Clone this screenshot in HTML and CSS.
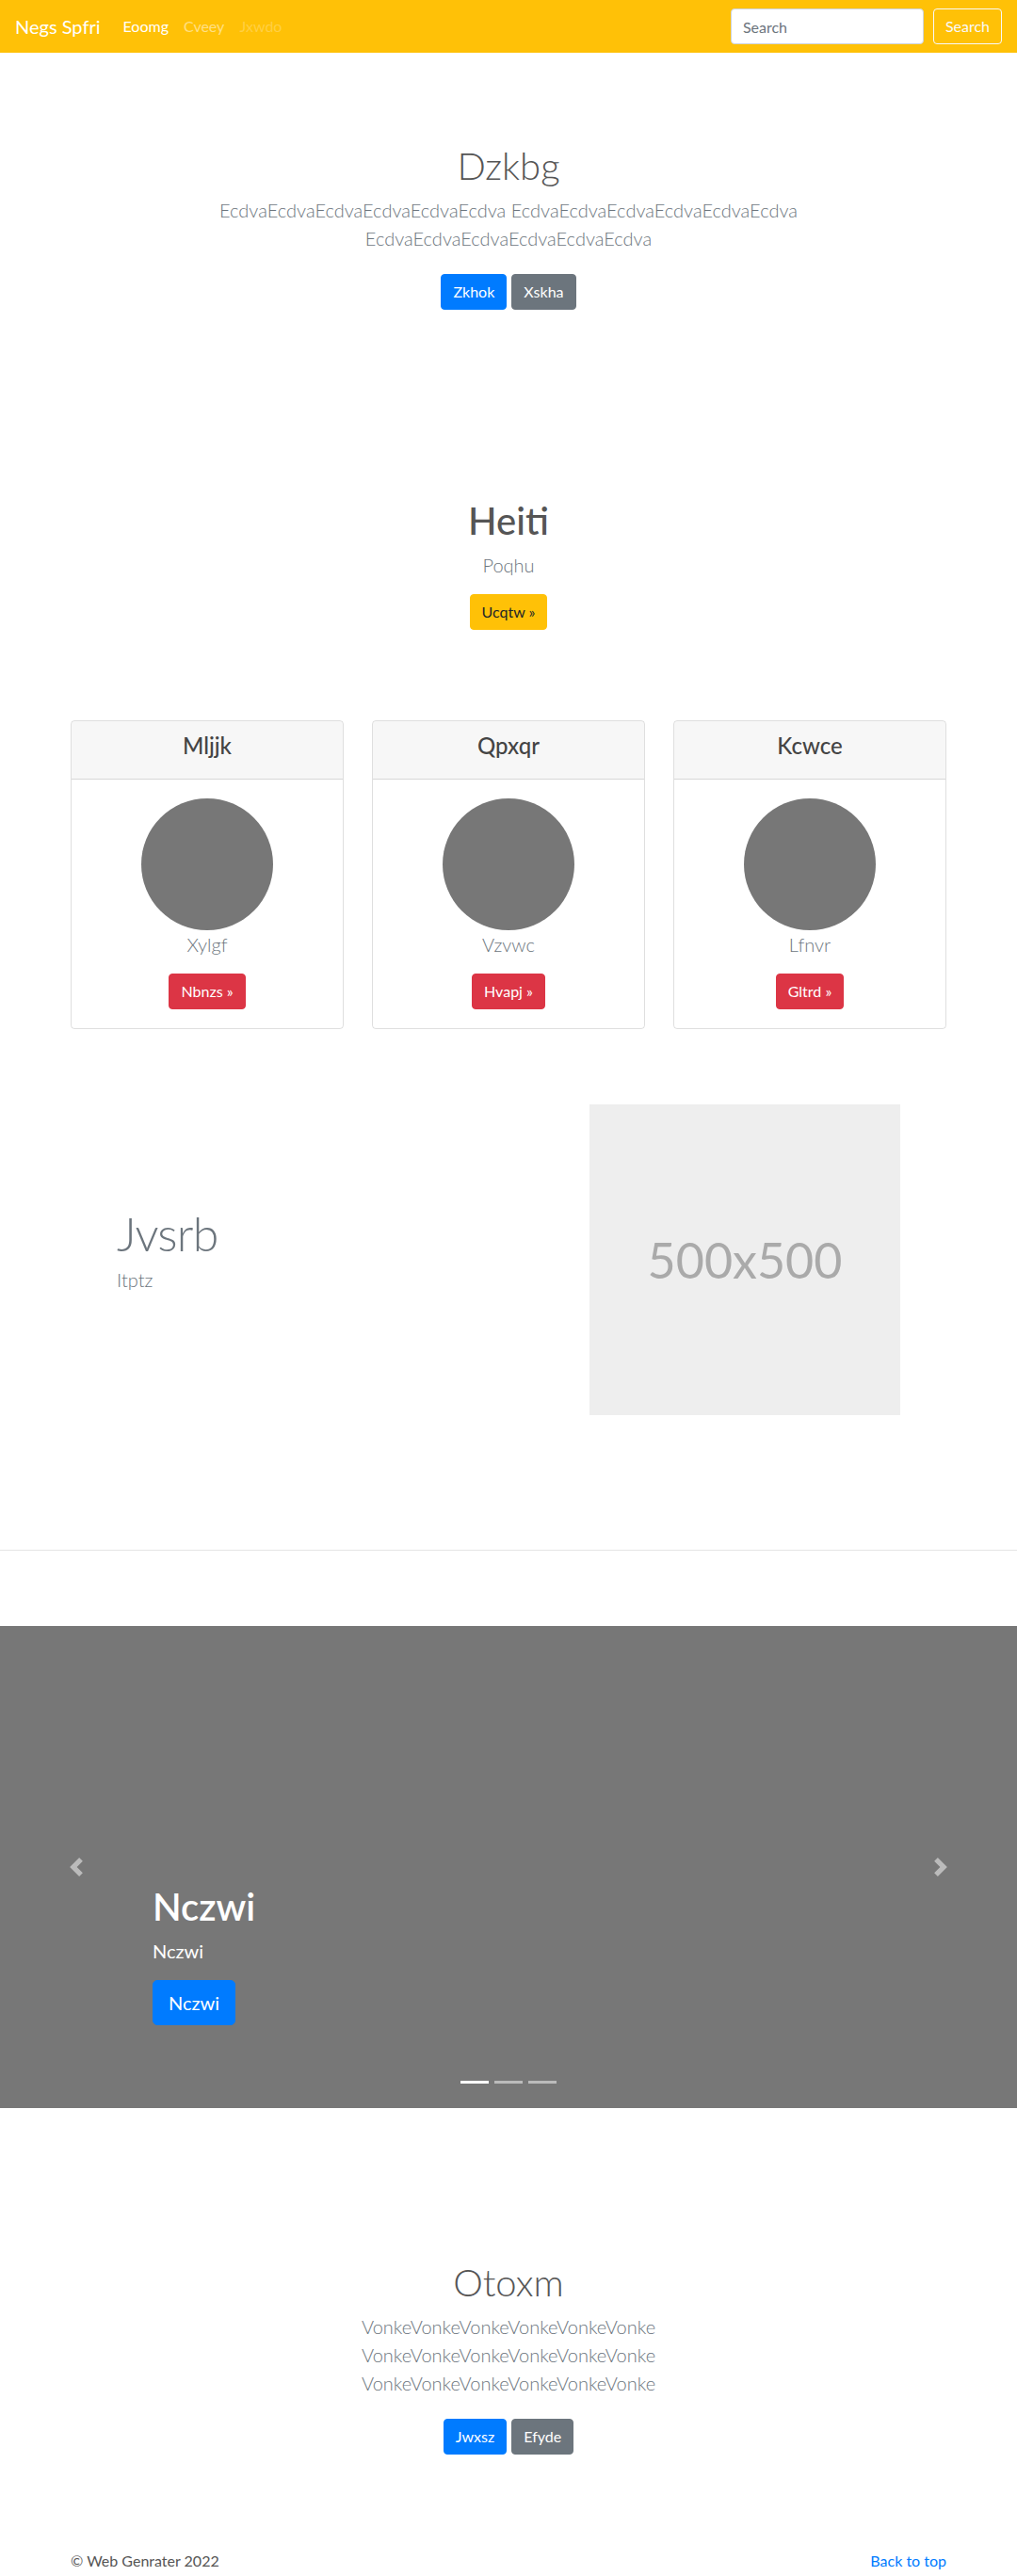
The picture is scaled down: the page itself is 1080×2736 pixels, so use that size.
FILE: index.html
```html
<!DOCTYPE html>
<html lang="en">
<head>
<meta charset="utf-8">
<title>Negs Spfri</title>
<link rel="stylesheet" href="styles.css">
</head>
<body>
<nav class="navbar">
  <a class="brand" href="#">Negs Spfri</a>
  <ul class="nav-links">
    <li><a class="nav-link active" href="#">Eoomg</a></li>
    <li><a class="nav-link" href="#">Cveey</a></li>
    <li><a class="nav-link disabled" href="#">Jxwdo</a></li>
  </ul>
  <form class="search">
    <input class="search-input" type="text" placeholder="Search">
    <button class="search-btn" type="button">Search</button>
  </form>
</nav>

<main>
  <section class="hero hero-top">
    <h1 class="hero-title">Dzkbg</h1>
    <p class="lead hero-lead hero-lead-wide">EcdvaEcdvaEcdvaEcdvaEcdvaEcdva EcdvaEcdvaEcdvaEcdvaEcdvaEcdva EcdvaEcdvaEcdvaEcdvaEcdvaEcdva</p>
    <div class="btn-row">
      <a class="btn btn-primary" href="#">Zkhok</a>
      <a class="btn btn-secondary" href="#">Xskha</a>
    </div>
  </section>

  <section class="hero hero-mid">
    <h1 class="hero-title hero-title-bold">Heiti</h1>
    <p class="lead hero-lead">Poqhu</p>
    <a class="btn btn-warning" href="#">Ucqtw &raquo;</a>
  </section>

  <section class="cards">
    <div class="card">
      <div class="card-header"><h4 class="card-title">Mljjk</h4></div>
      <div class="card-body">
        <div class="avatar"></div>
        <p class="lead card-text">Xylgf</p>
        <a class="btn btn-danger" href="#">Nbnzs &raquo;</a>
      </div>
    </div>
    <div class="card">
      <div class="card-header"><h4 class="card-title">Qpxqr</h4></div>
      <div class="card-body">
        <div class="avatar"></div>
        <p class="lead card-text">Vzvwc</p>
        <a class="btn btn-danger" href="#">Hvapj &raquo;</a>
      </div>
    </div>
    <div class="card">
      <div class="card-header"><h4 class="card-title">Kcwce</h4></div>
      <div class="card-body">
        <div class="avatar"></div>
        <p class="lead card-text">Lfnvr</p>
        <a class="btn btn-danger" href="#">Gltrd &raquo;</a>
      </div>
    </div>
  </section>

  <section class="featurette">
    <div class="featurette-text">
      <h2 class="featurette-heading">Jvsrb</h2>
      <p class="lead featurette-lead">Itptz</p>
    </div>
    <div class="placeholder"><span class="placeholder-text">500x500</span></div>
  </section>

  <hr class="divider">

  <section class="carousel">
    <div class="carousel-caption">
      <h1 class="caption-title">Nczwi</h1>
      <p class="caption-text">Nczwi</p>
      <a class="btn btn-lg btn-primary" href="#">Nczwi</a>
    </div>
    <a class="carousel-control prev" href="#">
      <svg width="20" height="20" viewBox="0 0 8 8" fill="#fff"><path d="M5.25 0l-4 4 4 4 1.5-1.5L4.25 4l2.5-2.5L5.25 0z"/></svg>
    </a>
    <a class="carousel-control next" href="#">
      <svg width="20" height="20" viewBox="0 0 8 8" fill="#fff"><path d="M2.75 0l-1.5 1.5L3.75 4l-2.5 2.5L2.75 8l4-4-4-4z"/></svg>
    </a>
    <ol class="indicators">
      <li class="indicator active"></li>
      <li class="indicator"></li>
      <li class="indicator"></li>
    </ol>
  </section>

  <section class="hero hero-bottom">
    <h1 class="hero-title">Otoxm</h1>
    <p class="lead hero-lead hero-lead-narrow">VonkeVonkeVonkeVonkeVonkeVonke VonkeVonkeVonkeVonkeVonkeVonke VonkeVonkeVonkeVonkeVonkeVonke</p>
    <div class="btn-row">
      <a class="btn btn-primary" href="#">Jwxsz</a>
      <a class="btn btn-secondary" href="#">Efyde</a>
    </div>
  </section>
</main>

<footer class="footer">
  <p class="footer-copy">&copy; Web Genrater 2022</p>
  <a class="footer-link" href="#">Back to top</a>
</footer>
</body>
</html>
```

FILE: styles.css
```css
* { box-sizing: border-box; }

body {
  margin: 0;
  font-family: Lato, "Open Sans", sans-serif;
  font-size: 16px;
  line-height: 1.5;
  color: #555;
  background: #fff;
}

h1, h2, h3, h4, p { margin: 0; }
a { text-decoration: none; }

/* Navbar */
.navbar {
  display: flex;
  align-items: center;
  height: 56px;
  padding: 0 16px;
  background: #ffc107;
}
.brand {
  font-size: 20px;
  line-height: 30px;
  color: #fff;
  margin-right: 16px;
}
.nav-links {
  display: flex;
  flex: 1;
  list-style: none;
  margin: 0;
  padding: 0;
}
.nav-link {
  display: block;
  padding: 8px;
  color: rgba(255, 255, 255, 0.5);
}
.nav-link.active { color: #fff; }
.nav-link.disabled { color: rgba(255, 255, 255, 0.25); }

.search {
  display: flex;
  gap: 10px;
  margin: 0;
}
.search-input {
  width: 205px;
  height: 38px;
  padding: 6px 12px;
  font: inherit;
  color: #495057;
  background: #fff;
  border: 1px solid #ced4da;
  border-radius: 4px;
}
.search-input::placeholder { color: #6c757d; }
.search-btn {
  height: 38px;
  padding: 6px 12px;
  font: inherit;
  color: #f8f9fa;
  background: transparent;
  border: 1px solid #f8f9fa;
  border-radius: 4px;
}

/* Buttons */
.btn {
  display: inline-block;
  padding: 6px 12px;
  font-size: 16px;
  line-height: 1.5;
  font-weight: 400;
  border: 1px solid transparent;
  border-radius: 4px;
  color: #fff;
  vertical-align: middle;
}
.btn-primary { background: #007bff; border-color: #007bff; }
.btn-secondary { background: #6c757d; border-color: #6c757d; }
.btn-warning { background: #ffc107; border-color: #ffc107; color: #212529; }
.btn-danger { background: #dc3545; border-color: #dc3545; }
.btn-lg {
  padding: 8px 16px;
  font-size: 20px;
  border-radius: 5px;
}

/* Hero sections */
.hero { text-align: center; }
.hero-top { padding-top: 96px; }
.hero-mid { margin-top: 200px; }
.hero-bottom { margin-top: 161px; }

.hero-title {
  font-size: 40px;
  font-weight: 300;
  line-height: 1.2;
  margin-bottom: 8px;
  color: #555;
}
.hero-title-bold { font-weight: 500; }

.lead {
  font-size: 20px;
  font-weight: 300;
  line-height: 1.5;
}
.hero-lead {
  margin: 0 auto 16px;
  color: #6c757d;
}
.hero-lead-wide { max-width: 720px; margin-bottom: 23px; }
.hero-lead-narrow { max-width: 450px; margin-bottom: 23px; }

.btn-row {
  display: flex;
  justify-content: center;
  gap: 5px;
}

/* Cards */
.cards {
  display: grid;
  grid-template-columns: repeat(3, 290px);
  justify-content: center;
  gap: 30px;
  margin-top: 96px;
}
.card {
  border: 1px solid rgba(0, 0, 0, 0.125);
  border-radius: 4px;
  text-align: center;
  overflow: hidden;
}
.card-header {
  padding: 12px 20px;
  background: rgba(0, 0, 0, 0.03);
  border-bottom: 1px solid rgba(0, 0, 0, 0.125);
}
.card-title {
  font-size: 24px;
  font-weight: 500;
  line-height: 1.2;
  margin-bottom: 8px;
  color: #444;
}
.card-body { padding: 20px; }
.avatar {
  width: 140px;
  height: 140px;
  margin: 0 auto;
  border-radius: 50%;
  background: #777;
}
.card-text {
  color: #6c757d;
  margin-bottom: 16px;
}

/* Featurette */
.featurette {
  display: flex;
  align-items: center;
  width: 960px;
  margin: 80px auto 0;
  padding: 0 64px;
}
.featurette-text { flex: 1; }
.featurette-heading {
  font-size: 50px;
  font-weight: 300;
  line-height: 1;
  letter-spacing: -0.8px;
  margin-bottom: 9px;
  color: #6c757d;
}
.featurette-lead {
  color: #6c757d;
  margin-bottom: 16px;
}
.placeholder {
  display: flex;
  align-items: center;
  justify-content: center;
  width: 330px;
  height: 330px;
  background: #eee;
}
.placeholder-text {
  font-size: 52px;
  font-weight: 400;
  color: #aaa;
}

.divider {
  margin: 143px 0 80px;
  border: 0;
  border-top: 1px solid rgba(0, 0, 0, 0.1);
}

/* Carousel */
.carousel {
  position: relative;
  height: 512px;
  background: #777;
}
.carousel-caption {
  position: absolute;
  left: 15%;
  right: 15%;
  bottom: 68px;
  padding-bottom: 20px;
  color: #fff;
  text-align: left;
  z-index: 2;
}
.caption-title {
  font-size: 40px;
  font-weight: 600;
  line-height: 1.2;
  margin-bottom: 8px;
}
.caption-text {
  font-size: 20px;
  margin-bottom: 16px;
}
.carousel-control {
  position: absolute;
  top: 0;
  bottom: 0;
  width: 15%;
  display: flex;
  align-items: center;
  justify-content: center;
  opacity: 0.5;
}
.carousel-control.prev { left: 0; }
.carousel-control.next { right: 0; }
.indicators {
  position: absolute;
  left: 0;
  right: 0;
  bottom: 16px;
  display: flex;
  justify-content: center;
  margin: 0;
  padding: 0;
  list-style: none;
}
.indicator {
  width: 30px;
  height: 3px;
  margin: 10px 3px;
  background: #fff;
  opacity: 0.5;
}
.indicator.active { opacity: 1; }

/* Footer */
.footer {
  display: flex;
  justify-content: space-between;
  width: 960px;
  margin: 101px auto 0;
  padding: 0 15px 16px;
}
.footer-copy { color: #555; }
.footer-link { color: #007bff; }
```
